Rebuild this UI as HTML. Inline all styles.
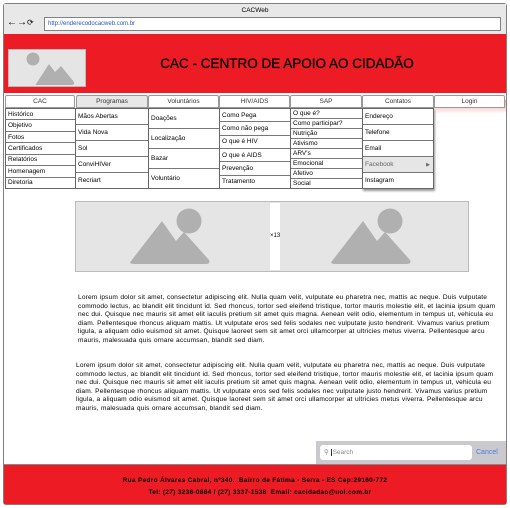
<!DOCTYPE html>
<html><head><meta charset="utf-8"><style>
*{margin:0;padding:0;box-sizing:border-box}
body{width:510px;height:508px;background:#fff;font-family:"Liberation Sans",Arial,sans-serif;position:relative;overflow:hidden;color:#000}
.a{position:absolute}
.frame{left:3px;top:3px;width:504px;height:502px;border:1px solid #808080;border-radius:3px;background:#fff}
.tb{left:4px;top:4px;width:502px;height:30px;background:#e8e8e8}
.url{left:44px;top:17px;width:457px;height:14px;border:1px solid #808080;background:#fff;font-size:6px;color:#2255cc;padding:3px 0 0 3px}
.red{background:#ed1c24}
.tab{top:95px;height:13px;border:1px solid #999;border-radius:2px 2px 0 0;background:#fff;font-size:6.5px;text-align:center;line-height:11px;color:#333}
.col{border:1px solid #666;background:#fff}
.it{border-bottom:1px solid #777;font-size:6.5px;padding-left:2px;display:flex;align-items:center}
.it:last-child{border-bottom:none}
p.t{font-size:6.6px;line-height:8.6px;position:absolute;width:426px;letter-spacing:0.15px;word-spacing:0.3px}
</style></head><body>
<div class="a frame"></div>
<div class="a tb"></div>
<div class="a" style="left:0;top:7px;width:510px;text-align:center;font-size:6.5px">CACWeb</div>
<div class="a" style="left:7px;top:17px;font-size:10px;line-height:12px">←→<span style="font-size:8px">⟳</span></div>
<div class="a url">http://enderecodocacweb.com.br</div>
<div class="a red" style="left:4px;top:34px;width:502px;height:59px"></div>
<div class="a" style="left:8px;top:49px;width:78px;height:38px;background:#e5e5e5;border:1px solid #bbb">
<svg width="78" height="38" viewBox="0 0 78 38"><circle cx="24" cy="9" r="6.5" fill="#b0b0b0"/><path d="M27 34 L40 14 L46 22 L52 16 L65 32 Q66 35 62 35 L30 35 Q25 35 27 34Z" fill="#b0b0b0"/></svg></div>
<div class="a" style="left:137px;top:56px;width:300px;text-align:center;font-size:13.5px;white-space:nowrap;-webkit-text-stroke:0.3px #000">CAC - CENTRO DE APOIO AO CIDADÃO</div>
<div class="a" style="left:434px;top:100px;width:72px;height:14px;background:linear-gradient(#f7a0a0,rgba(255,255,255,0))"></div>

<div class="a tab" style="left:5px;width:70px">CAC</div>
<div class="a tab" style="left:76px;width:72px;background:#e8e8e8">Programas</div>
<div class="a tab" style="left:148px;width:71px">Voluntários</div>
<div class="a tab" style="left:219px;width:71px">HIV/AIDS</div>
<div class="a tab" style="left:290px;width:72px">SAP</div>
<div class="a tab" style="left:362px;width:72px">Contatos</div>
<div class="a tab" style="left:434px;width:71px">Login</div>

<div class="a col" style="left:5px;top:108px;width:71px;height:81px;display:flex;flex-direction:column">
<div class="it" style="flex:1">Histórico</div><div class="it" style="flex:1">Objetivo</div><div class="it" style="flex:1">Fotos</div><div class="it" style="flex:1">Certificados</div><div class="it" style="flex:1">Relatórios</div><div class="it" style="flex:1">Homenagem</div><div class="it" style="flex:1">Diretoria</div></div>
<div class="a col" style="left:75px;top:108px;width:74px;height:81px;display:flex;flex-direction:column">
<div class="it" style="flex:1">Mãos Abertas</div><div class="it" style="flex:1">Vida Nova</div><div class="it" style="flex:1">Sol</div><div class="it" style="flex:1">ConviHIVer</div><div class="it" style="flex:1">Recriart</div></div>
<div class="a col" style="left:148px;top:108px;width:72px;height:81px;display:flex;flex-direction:column">
<div class="it" style="flex:1">Doações</div><div class="it" style="flex:1">Localização</div><div class="it" style="flex:1">Bazar</div><div class="it" style="flex:1">Voluntário</div></div>
<div class="a col" style="left:219px;top:108px;width:72px;height:81px;display:flex;flex-direction:column">
<div class="it" style="flex:1">Como Pega</div><div class="it" style="flex:1">Como não pega</div><div class="it" style="flex:1">O que é HIV</div><div class="it" style="flex:1">O que é AIDS</div><div class="it" style="flex:1">Prevenção</div><div class="it" style="flex:1">Tratamento</div></div>
<div class="a col" style="left:290px;top:108px;width:73px;height:81px;display:flex;flex-direction:column">
<div class="it" style="flex:1">O que é?</div><div class="it" style="flex:1">Como participar?</div><div class="it" style="flex:1">Nutrição</div><div class="it" style="flex:1">Ativismo</div><div class="it" style="flex:1">ARV's</div><div class="it" style="flex:1">Emocional</div><div class="it" style="flex:1">Afetivo</div><div class="it" style="flex:1">Social</div></div>
<div class="a col" style="left:362px;top:108px;width:72px;height:81px;display:flex;flex-direction:column;box-shadow:1px 2px 2px #999">
<div class="it" style="flex:1">Endereço</div><div class="it" style="flex:1">Telefone</div><div class="it" style="flex:1">Email</div><div class="it" style="flex:1;background:#e6e6e6;color:#666;justify-content:space-between;padding-right:3px">Facebook<span style="font-size:5px">▶</span></div><div class="it" style="flex:1">Instagram</div></div>

<div class="a" style="left:75px;top:201px;width:394px;height:71px;background:#e5e5e5;border:1px solid #bbb">
<svg class="a" style="left:0;top:0" width="392" height="69" viewBox="0 0 392 69"><circle cx="113" cy="19" r="12.5" fill="#b0b0b0"/><path d="M55 59 L86 19 L100 39 L108 30 L133 58 Q135 62 129 62 L59 62 Q52 62 55 59Z" fill="#b0b0b0"/><circle cx="314" cy="19" r="12.5" fill="#b0b0b0"/><path d="M256 59 L287 19 L301 39 L309 30 L334 58 Q336 62 330 62 L260 62 Q253 62 256 59Z" fill="#b0b0b0"/></svg>
<div class="a" style="left:194px;top:1px;width:10px;height:67px;background:#fff;font-size:6px;line-height:67px">×13</div></div>

<p class="t" style="left:78px;top:294px">Lorem ipsum dolor sit amet, consectetur adipiscing elit. Nulla quam velit, vulputate eu pharetra nec, mattis ac neque. Duis vulputate commodo lectus, ac blandit elit tincidunt id. Sed rhoncus, tortor sed eleifend tristique, tortor mauris molestie elit, et lacinia ipsum quam nec dui. Quisque nec mauris sit amet elit iaculis pretium sit amet quis magna. Aenean velit odio, elementum in tempus ut, vehicula eu diam. Pellentesque rhoncus aliquam mattis. Ut vulputate eros sed felis sodales nec vulputate justo hendrerit. Vivamus varius pretium ligula, a aliquam odio euismod sit amet. Quisque laoreet sem sit amet orci ullamcorper at ultricies metus viverra. Pellentesque arcu mauris, malesuada quis ornare accumsan, blandit sed diam.</p>
<p class="t" style="left:76px;top:362px">Lorem ipsum dolor sit amet, consectetur adipiscing elit. Nulla quam velit, vulputate eu pharetra nec, mattis ac neque. Duis vulputate commodo lectus, ac blandit elit tincidunt id. Sed rhoncus, tortor sed eleifend tristique, tortor mauris molestie elit, et lacinia ipsum quam nec dui. Quisque nec mauris sit amet elit iaculis pretium sit amet quis magna. Aenean velit odio, elementum in tempus ut, vehicula eu diam. Pellentesque rhoncus aliquam mattis. Ut vulputate eros sed felis sodales nec vulputate justo hendrerit. Vivamus varius pretium ligula, a aliquam odio euismod sit amet. Quisque laoreet sem sit amet orci ullamcorper at ultricies metus viverra. Pellentesque arcu mauris, malesuada quis ornare accumsan, blandit sed diam.</p>

<div class="a" style="left:316px;top:441px;width:190px;height:23px;background:#c9c9ce"></div>
<div class="a" style="left:320px;top:445px;width:152px;height:15px;background:#fff;border-radius:3px;font-size:6.5px;color:#888;line-height:15px;padding-left:4px">⚲ <span style="border-left:1px solid #333;padding-left:1px">Search</span></div>
<div class="a" style="left:476px;top:449px;font-size:7px;color:#4a7ee0">Cancel</div>

<div class="a red" style="left:4px;top:464px;width:502px;height:40px;border-top:1px solid #888"></div>
<div class="a" style="left:0;top:477px;width:510px;text-align:center;font-size:6.5px;font-weight:bold;letter-spacing:0.3px">Rua Pedro Álvares Cabral, nº340.&nbsp; Bairro de Fátima - Serra - ES Cep:29160-772</div>
<div class="a" style="left:5px;top:489px;width:510px;text-align:center;font-size:6.5px;font-weight:bold;letter-spacing:0.3px">Tel: (27) 3238-0884 / (27) 3337-1538&nbsp; Email: cacidadao@uol.com.br</div>
</body></html>
